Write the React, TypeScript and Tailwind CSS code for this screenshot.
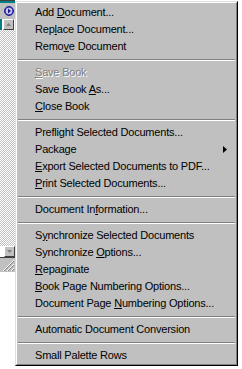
import React from 'react';

type Item =
  | { kind: 'sep' }
  | { kind: 'item'; label: string; u?: number; disabled?: boolean; sub?: boolean };

const items: Item[] = [
  { kind: 'item', label: 'Add Document...', u: 4 },
  { kind: 'item', label: 'Replace Document...', u: 3 },
  { kind: 'item', label: 'Remove Document', u: 4 },
  { kind: 'sep' },
  { kind: 'item', label: 'Save Book', u: 0, disabled: true },
  { kind: 'item', label: 'Save Book As...', u: 10 },
  { kind: 'item', label: 'Close Book', u: 0 },
  { kind: 'sep' },
  { kind: 'item', label: 'Preflight Selected Documents...' },
  { kind: 'item', label: 'Package', sub: true },
  { kind: 'item', label: 'Export Selected Documents to PDF...', u: 0 },
  { kind: 'item', label: 'Print Selected Documents...', u: 0 },
  { kind: 'sep' },
  { kind: 'item', label: 'Document Information...', u: 11 },
  { kind: 'sep' },
  { kind: 'item', label: 'Synchronize Selected Documents', u: 1 },
  { kind: 'item', label: 'Synchronize Options...', u: 12 },
  { kind: 'item', label: 'Repaginate', u: 0 },
  { kind: 'item', label: 'Book Page Numbering Options...', u: 0 },
  { kind: 'item', label: 'Document Page Numbering Options...', u: 14 },
  { kind: 'sep' },
  { kind: 'item', label: 'Automatic Document Conversion' },
  { kind: 'sep' },
  { kind: 'item', label: 'Small Palette Rows' },
];

function Label({ text, u }: { text: string; u?: number }) {
  if (u === undefined) return <>{text}</>;
  return (
    <>
      {text.slice(0, u)}
      <span className="underline underline-offset-[1px]">{text[u]}</span>
      {text.slice(u + 1)}
    </>
  );
}

function LeftStrip() {
  return (
    <div className="flex w-[15px] flex-col">
      {/* top title bits */}
      <div className="h-[1px] bg-[#404040]" />
      <div className="h-[2px] bg-[#008080]" />
      <div className="flex h-[16px] items-center justify-center bg-[#c0c0c0] pl-[3px]">
        <svg width="10" height="10" viewBox="0 0 10 10">
          <circle cx="5" cy="5" r="4.5" fill="#3a3ad0" stroke="#202080" strokeWidth="1" />
          <circle cx="5" cy="5" r="3.2" fill="#c8c8f0" />
          <path d="M4 2.5 L7 5 L4 7.5 Z" fill="#202080" />
        </svg>
      </div>
      <div className="flex h-[11px]">
        <div className="w-[2px] bg-[#008080]" />
        <div className="ml-[1px] flex w-[11px] items-center justify-center border border-t-white border-l-white border-r-[#404040] border-b-[#404040] bg-[#c0c0c0]">
          <svg width="5" height="3" viewBox="0 0 5 3">
            <path d="M2.5 0 L5 3 L0 3 Z" fill="#808080" />
          </svg>
        </div>
      </div>
      <div className="h-[216px] bg-[repeating-conic-gradient(#c0c0c0_0%_25%,#ffffff_0%_50%)] bg-size-[2px_2px]" />
      <div className="flex h-[11px] justify-end">
        <div className="flex w-[11px] items-center justify-center border border-t-white border-l-white border-r-[#404040] border-b-[#404040] bg-[#c0c0c0]">
          <svg width="5" height="3" viewBox="0 0 5 3">
            <path d="M0 0 L5 0 L2.5 3 Z" fill="#808080" />
          </svg>
        </div>
      </div>
      <div className="flex h-[15px] items-end justify-end border-t border-[#404040] bg-[#c0c0c0]">
        <svg width="13" height="13" viewBox="0 0 13 13">
          <path d="M12 1 L1 12 M12 5 L5 12 M12 9 L9 12" stroke="#ffffff" strokeWidth="1" />
          <path d="M12 2 L2 12 M12 6 L6 12 M12 10 L10 12" stroke="#808080" strokeWidth="1" />
        </svg>
      </div>
      <div className="flex-1 bg-white" />
    </div>
  );
}

export default function App() {
  return (
    <div
      className="flex h-[369px] w-[242px] overflow-hidden bg-white text-[11px] leading-none tracking-[-0.2px] text-black"
      style={{ fontFamily: '"Liberation Sans", Arial, sans-serif' }}
    >
      <LeftStrip />
      <div className="flex flex-col pt-[1px]">
        <div className="w-[223px] border border-t-[#dfdfdf] border-l-[#dfdfdf] border-r-black border-b-black">
          <div className="border border-t-white border-l-white border-r-[#808080] border-b-[#808080] bg-[#c0c0c0] pt-[1px]">
            {items.map((it, i) =>
              it.kind === 'sep' ? (
                <div key={i} className="flex h-[9px] flex-col justify-center px-[1px]">
                  <div className="h-[1px] bg-[#808080]" />
                  <div className="h-[1px] bg-white" />
                </div>
              ) : (
                <div key={i} className="relative flex h-[17px] items-center whitespace-nowrap pl-[18px] pr-3">
                  {it.disabled ? (
                    <span className="relative inline-block">
                      <span className="absolute left-[1px] top-[1px] whitespace-nowrap text-white">
                        <Label text={it.label} u={it.u} />
                      </span>
                      <span className="relative text-[#808080]">
                        <Label text={it.label} u={it.u} />
                      </span>
                    </span>
                  ) : (
                    <span>
                      <Label text={it.label} u={it.u} />
                    </span>
                  )}
                  {it.sub && (
                    <svg className="absolute right-[9px]" width="4" height="7" viewBox="0 0 4 7">
                      <path d="M0 0 L4 3.5 L0 7 Z" fill="#000" />
                    </svg>
                  )}
                </div>
              )
            )}
          </div>
        </div>
      </div>
    </div>
  );
}
